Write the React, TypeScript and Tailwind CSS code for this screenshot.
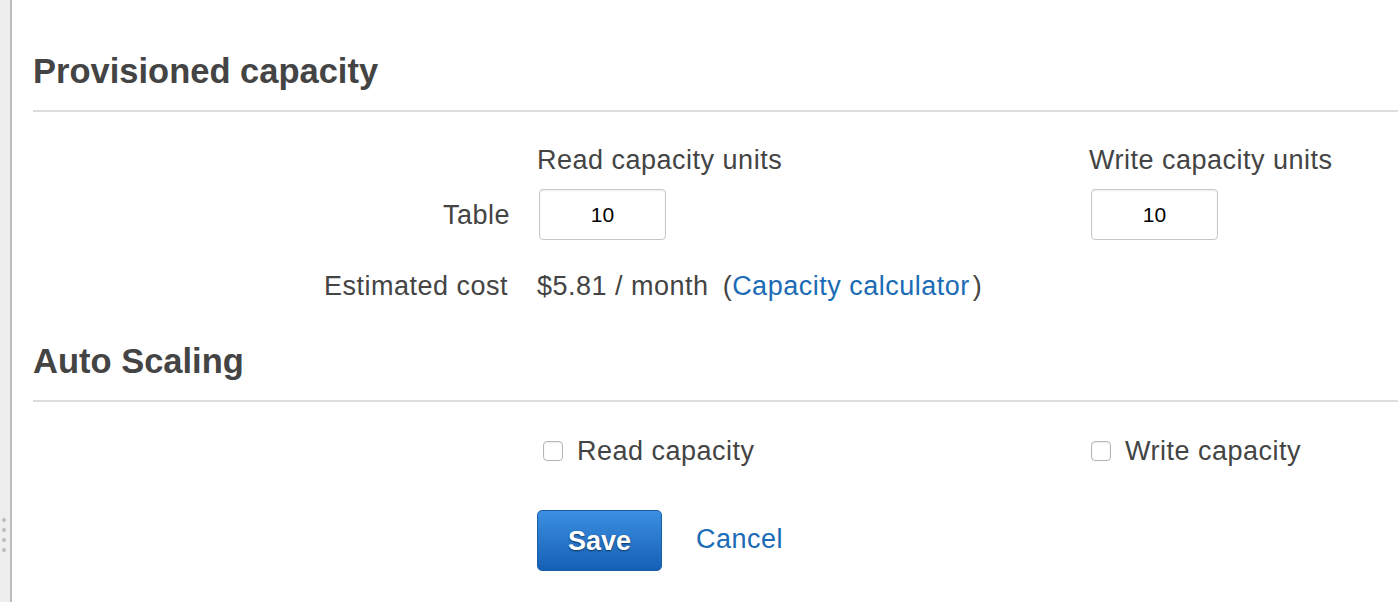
const font = { fontFamily: '"Liberation Sans", Arial, sans-serif' };

function Divider() {
  return <div className="h-[2px] bg-[#dddddd]" />;
}

function Checkbox() {
  return (
    <span className="inline-block w-[20px] h-[20px] rounded-[4px] border border-[#b5b5b5] bg-white shadow-[inset_0_1px_2px_rgba(0,0,0,0.08)]" />
  );
}

function NumberBox({ value }: { value: string }) {
  return (
    <div className="w-[127px] h-[51px] rounded-[4px] border border-[#c8c8c8] bg-white shadow-[inset_0_1px_2px_rgba(0,0,0,0.08)] flex items-center justify-center text-[21px] tracking-normal text-black">
      {value}
    </div>
  );
}

export default function App() {
  return (
    <div className="flex h-[602px] w-[1398px] overflow-hidden bg-white text-[#444]" style={font}>
      <div className="w-[12px] shrink-0 bg-[#eeeeee] border-r-2 border-[#bcbcbc] flex flex-col items-start pl-[2px] pt-[518px] gap-[6px]">
        <span className="w-[4px] h-[4px] rounded-full bg-[#bbbbbb]" />
        <span className="w-[4px] h-[4px] rounded-full bg-[#bbbbbb]" />
        <span className="w-[4px] h-[4px] rounded-full bg-[#bbbbbb]" />
        <span className="w-[4px] h-[4px] rounded-full bg-[#bbbbbb]" />
      </div>
      <div className="flex-1 pl-[21px]">
        <h2 className="mt-[51px] text-[34.5px] leading-[40px] font-bold">Provisioned capacity</h2>
        <div className="mt-[19px]">
          <Divider />
        </div>

        <div className="grid grid-cols-[477px_525px_1fr] gap-x-[27px] text-[27px] leading-[30px] tracking-[0.5px]">
          <div className="mt-[33px]" />
          <div className="mt-[33px]">Read capacity units</div>
          <div className="mt-[33px]">Write capacity units</div>

          <div className="mt-[14px] self-center text-right">Table</div>
          <div className="mt-[14px] pl-[2px]">
            <NumberBox value="10" />
          </div>
          <div className="mt-[14px] pl-[2px]">
            <NumberBox value="10" />
          </div>

          <div className="mt-[31px] text-right pr-[2px]">Estimated cost</div>
          <div className="mt-[31px] col-span-2">
            $5.81 / month <span className="ml-[6px]">(</span>
            <a className="text-[#1b6bb5]">Capacity calculator</a>
            <span className="ml-[3px]">)</span>
          </div>
        </div>

        <h2 className="mt-[40px] text-[34.5px] leading-[40px] font-bold">Auto Scaling</h2>
        <div className="mt-[19px]">
          <Divider />
        </div>

        <div className="grid grid-cols-[477px_525px_1fr] gap-x-[27px] text-[27px] leading-[30px] tracking-[0.5px]">
          <div className="mt-[34px]" />
          <label className="mt-[34px] flex items-center gap-[14px] pl-[6px]">
            <Checkbox />
            Read capacity
          </label>
          <label className="mt-[34px] flex items-center gap-[14px] pl-[2px]">
            <Checkbox />
            Write capacity
          </label>

          <div className="mt-[44px]" />
          <div className="mt-[44px] col-span-2 flex items-center gap-[34px]">
            <button className="w-[125px] h-[61px] rounded-[5px] border border-[#1a5ea8] bg-gradient-to-b from-[#3b8fe0] to-[#1560b6] text-white text-[27px] font-bold tracking-normal [text-shadow:0_1px_2px_rgba(0,0,0,0.55)]">
              Save
            </button>
            <a className="text-[#1b6bb5] text-[27px] -mt-[4px]">Cancel</a>
          </div>
        </div>
      </div>
    </div>
  );
}
